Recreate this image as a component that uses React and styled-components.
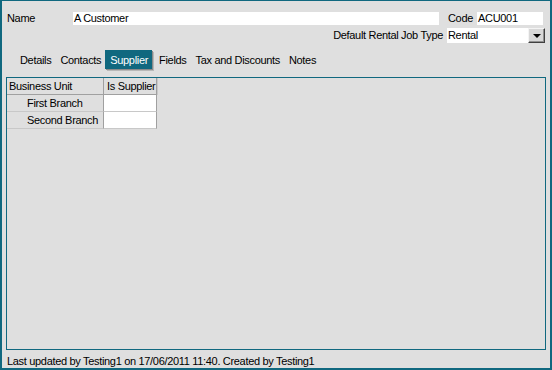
import React from "react";
import styled, { createGlobalStyle } from "styled-components";

const teal = "#10687f";

const GlobalStyle = createGlobalStyle`
  html, body {
    margin: 0;
    padding: 0;
    background: #dfdfdf;
  }
  * {
    box-sizing: border-box;
  }
`;

const Window = styled.div`
  width: 552px;
  height: 370px;
  border: 2px solid ${teal};
  border-top-width: 1px;
  background: #dfdfdf;
  font-family: "Liberation Sans", Arial, sans-serif;
  font-size: 11px;
  letter-spacing: -0.32px;
  color: #000;
  display: flex;
  flex-direction: column;
  padding: 11px 5px 0 4px;
`;

const Row = styled.div`
  display: flex;
  align-items: center;
  height: ${(p) => p.$h || 13}px;
  margin-top: ${(p) => p.$mt || 0}px;
  justify-content: ${(p) => (p.$right ? "flex-end" : "flex-start")};
  padding-left: 1px;
`;

const Label = styled.span`
  width: ${(p) => (p.$w ? p.$w + "px" : "auto")};
  margin-right: ${(p) => p.$mr || 0}px;
  margin-left: ${(p) => p.$ml || 0}px;
  white-space: nowrap;
  line-height: 13px;
`;

const Input = styled.div`
  background: #fff;
  height: ${(p) => p.$h || 13}px;
  width: ${(p) => p.$w}px;
  padding-left: 1px;
  line-height: ${(p) => p.$h || 13}px;
  white-space: nowrap;
`;

const Select = styled.div`
  display: flex;
  height: 15px;
`;

const DropButton = styled.div`
  width: 17px;
  height: 15px;
  background: #d8d8d8;
  border-top: 1px solid #f4f4f4;
  border-left: 1px solid #f4f4f4;
  border-right: 1px solid #404040;
  border-bottom: 1px solid #404040;
  box-shadow: inset -1px -1px 0 #909090;
  display: flex;
  align-items: center;
  justify-content: center;

  &::after {
    content: "";
    border-left: 4px solid transparent;
    border-right: 4px solid transparent;
    border-top: 4px solid #000;
    margin-top: 1px;
  }
`;

const Tabs = styled.div`
  display: flex;
  margin-top: 7px;
  margin-left: 9px;
  height: 19px;
  align-items: stretch;
`;

const Tab = styled.div`
  padding: 2px 4px 0 5px;
  display: flex;
  align-items: center;
  white-space: nowrap;
  background: ${(p) => (p.$active ? teal : "transparent")};
  color: ${(p) => (p.$active ? "#fff" : "#000")};
  box-shadow: ${(p) => (p.$active ? "1px 1px 0 #8a8a8a, 2px 2px 0 #b8b8b8" : "none")};
  margin-right: ${(p) => (p.$active ? 2 : 0)}px;
`;

const Panel = styled.div`
  margin-top: 8px;
  width: 540px;
  height: 274px;
  border: 1px solid ${teal};
  background: #dfdfdf;
`;

const Grid = styled.div`
  display: grid;
  grid-template-columns: 97px 53px 1px;
  grid-auto-rows: 17px;
`;

const HeadCell = styled.div`
  border-right: 1px solid #a0a0a0;
  border-bottom: 1px solid #a0a0a0;
  padding-left: ${(p) => p.$pl || 2}px;
  line-height: 16px;
  white-space: nowrap;
  overflow: hidden;
`;

const Spacer = styled.div`
  border-right: 1px solid #c8c8c8;
`;

const RowHead = styled.div`
  border-right: 1px solid #a0a0a0;
  border-bottom: 1px solid #c8c8c8;
  padding-left: 20px;
  line-height: 16px;
  white-space: nowrap;
`;

const ValueCell = styled.div`
  background: #fff;
  border-right: 1px solid #a0a0a0;
  border-bottom: 1px solid #c8c8c8;
`;

const Status = styled.div`
  margin-top: 5px;
  padding-left: 1px;
  line-height: 13px;
  white-space: nowrap;
`;

const tabs = ["Details", "Contacts", "Supplier", "Fields", "Tax and Discounts", "Notes"];
const branches = ["First Branch", "Second Branch"];

export default function App() {
  return (
    <>
      <GlobalStyle />
      <Window>
        <Row>
          <Label $w={66}>Name</Label>
          <Input $w={366}>A Customer</Input>
          <Label $ml={9} $mr={4}>Code</Label>
          <Input $w={66}>ACU001</Input>
        </Row>
        <Row $right $h={15} $mt={3}>
          <Label $mr={4}>Default Rental Job Type</Label>
          <Select>
            <Input $w={81} $h={15}>Rental</Input>
            <DropButton />
          </Select>
        </Row>
        <Tabs>
          {tabs.map((t) => (
            <Tab key={t} $active={t === "Supplier"}>
              {t}
            </Tab>
          ))}
        </Tabs>
        <Panel>
          <Grid>
            <HeadCell>Business Unit</HeadCell>
            <HeadCell $pl={3}>Is Supplier</HeadCell>
            <Spacer />
            {branches.map((b) => (
              <React.Fragment key={b}>
                <RowHead>{b}</RowHead>
                <ValueCell />
                <div />
              </React.Fragment>
            ))}
          </Grid>
        </Panel>
        <Status>Last updated by Testing1 on 17/06/2011 11:40. Created by Testing1</Status>
      </Window>
    </>
  );
}
